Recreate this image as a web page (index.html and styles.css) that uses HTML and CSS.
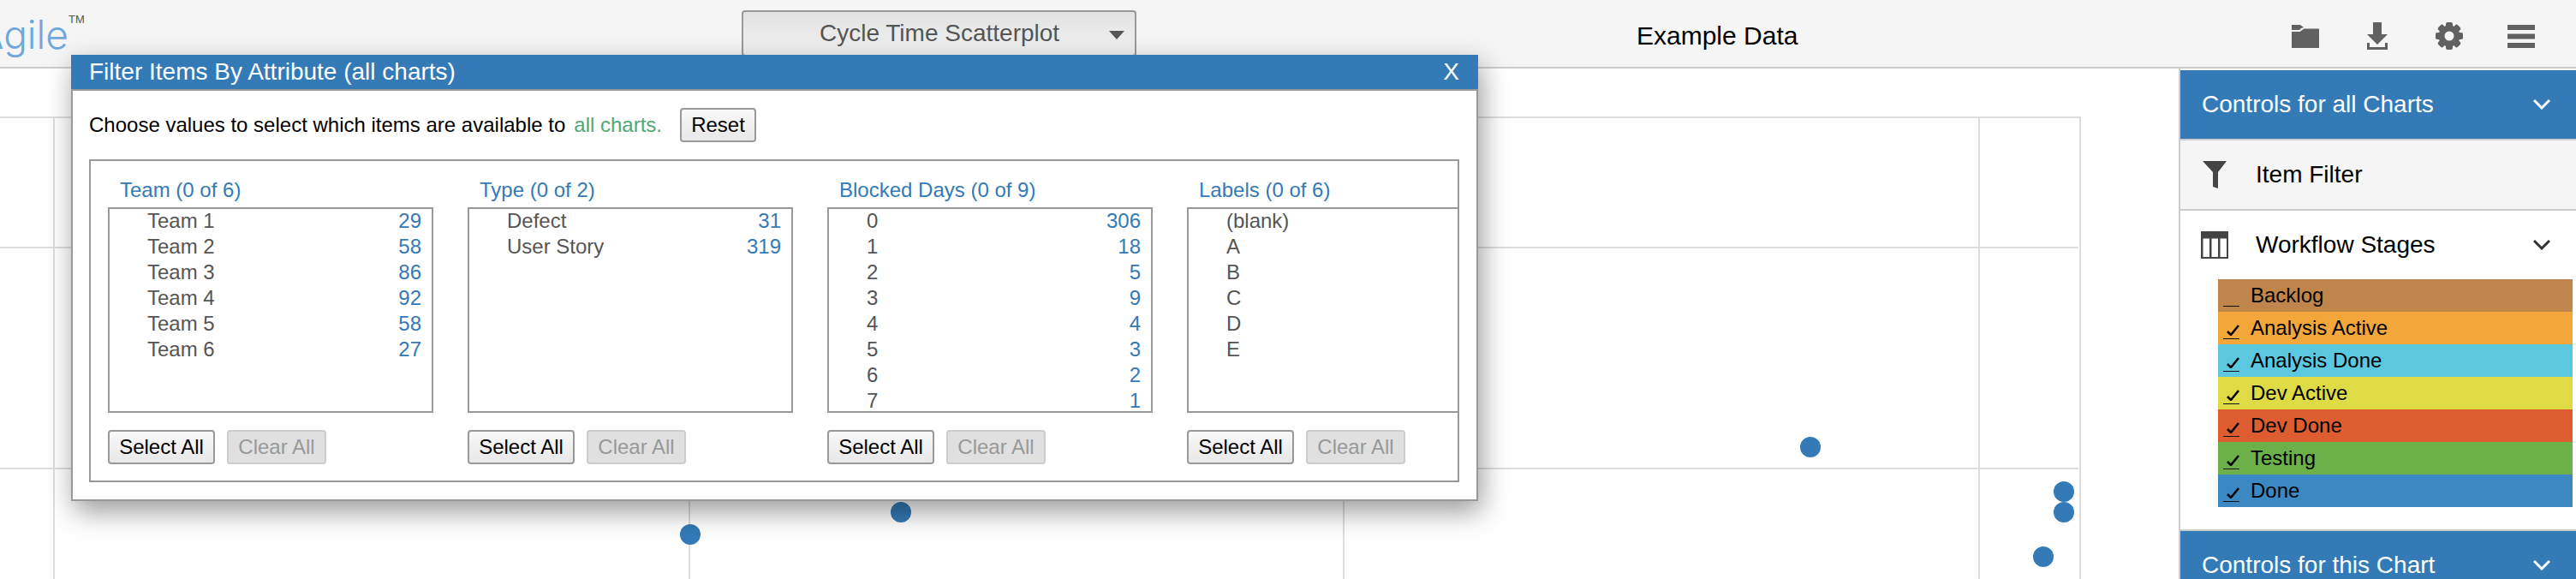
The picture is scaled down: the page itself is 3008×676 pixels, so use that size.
FILE: index.html
```html
<!DOCTYPE html>
<html>
  <head>
    <title>Cycle Time Scatterplot</title>
    <link rel="stylesheet" href="styles.css">
  </head>
  <body>
    <header class="top-bar">
      <div class="logo"><span class="logo-name">Agile</span><span class="logo-tm">TM</span></div>
      <div class="chart-select">
        <span>Cycle Time Scatterplot</span>
        <span class="select-arrow"></span>
      </div>
      <div class="data-name">Example Data</div>
      <div class="top-icons">
        <svg class="icon-folder" width="32" height="27" viewBox="0 0 32 27"><path d="M0 0H10L14 3L11 4L9 6H0Z"/><path d="M0 8H9.5L14.5 4.5H32V27H0Z"/></svg>
        <svg class="icon-download" width="24" height="32" viewBox="0 0 24 32"><path d="M7 0H17V14H24L12 26L0 14H7Z"/><path d="M0 24H3V29H21V24H24V32H0Z"/></svg>
        <svg class="icon-gear" width="32" height="32" viewBox="0 0 32 32">
          <circle cx="16" cy="16" r="12.5"/>
          <rect x="12" y="0" width="8" height="32" rx="2"/>
          <rect x="12" y="0" width="8" height="32" rx="2" transform="rotate(45 16 16)"/>
          <rect x="12" y="0" width="8" height="32" rx="2" transform="rotate(90 16 16)"/>
          <rect x="12" y="0" width="8" height="32" rx="2" transform="rotate(135 16 16)"/>
          <circle class="gear-hole" cx="16" cy="16" r="5.5"/>
        </svg>
        <svg class="icon-menu" width="32" height="27" viewBox="0 0 32 27"><rect width="32" height="6"/><rect y="10.5" width="32" height="6"/><rect y="21" width="32" height="6"/></svg>
      </div>
    </header>

    <div class="main">
      <div class="chart-area">
        <svg class="chart" width="2544" height="596" viewBox="0 80 2544 596">
          <g class="grid">
            <line x1="0" y1="137" x2="2430" y2="137"/>
            <line x1="0" y1="289" x2="2427" y2="289"/>
            <line x1="0" y1="547" x2="2427" y2="547"/>
            <line x1="63" y1="137" x2="63" y2="676"/>
            <line x1="805" y1="137" x2="805" y2="676"/>
            <line x1="1569" y1="137" x2="1569" y2="676"/>
            <line x1="2311" y1="137" x2="2311" y2="676"/>
            <line x1="2429" y1="137" x2="2429" y2="676"/>
          </g>
          <g class="points">
            <circle cx="806" cy="624" r="12"/>
            <circle cx="1052" cy="598" r="12"/>
            <circle cx="2114" cy="522" r="12"/>
            <circle cx="2410" cy="574" r="12"/>
            <circle cx="2410" cy="598" r="12"/>
            <circle cx="2386" cy="650" r="12"/>
          </g>
        </svg>
      </div>

      <aside class="sidebar">
        <div class="panel-head">
          <span>Controls for all Charts</span>
          <svg class="chevron" width="20" height="12" viewBox="0 0 20 12"><polyline points="1,1 10,10 19,1"/></svg>
        </div>
        <div class="side-row side-row-grey">
          <svg class="side-icon" width="32" height="32" viewBox="0 0 32 32"><path d="M2 0H30L20 13V32L14 30V13Z"/></svg>
          <span>Item Filter</span>
        </div>
        <div class="side-row">
          <svg class="side-icon" width="32" height="32" viewBox="0 0 32 32"><path fill-rule="evenodd" d="M0 0H32V32H0ZM2.5 8.5V30H10V8.5ZM12.5 8.5V30H20V8.5ZM22.5 8.5V30H30V8.5Z"/></svg>
          <span>Workflow Stages</span>
          <svg class="chevron chevron-dark" width="20" height="12" viewBox="0 0 20 12"><polyline points="1,1 10,10 19,1"/></svg>
        </div>
        <ul class="stages">
          <li class="stage stage-backlog"><span class="stage-check"></span>Backlog</li>
          <li class="stage stage-analysis-active"><span class="stage-check"><svg width="15" height="13" viewBox="0 0 15 13"><polyline points="1,8 5,12 14,1"/></svg></span>Analysis Active</li>
          <li class="stage stage-analysis-done"><span class="stage-check"><svg width="15" height="13" viewBox="0 0 15 13"><polyline points="1,8 5,12 14,1"/></svg></span>Analysis Done</li>
          <li class="stage stage-dev-active"><span class="stage-check"><svg width="15" height="13" viewBox="0 0 15 13"><polyline points="1,8 5,12 14,1"/></svg></span>Dev Active</li>
          <li class="stage stage-dev-done"><span class="stage-check"><svg width="15" height="13" viewBox="0 0 15 13"><polyline points="1,8 5,12 14,1"/></svg></span>Dev Done</li>
          <li class="stage stage-testing"><span class="stage-check"><svg width="15" height="13" viewBox="0 0 15 13"><polyline points="1,8 5,12 14,1"/></svg></span>Testing</li>
          <li class="stage stage-done"><span class="stage-check"><svg width="15" height="13" viewBox="0 0 15 13"><polyline points="1,8 5,12 14,1"/></svg></span>Done</li>
        </ul>
        <div class="panel-head panel-head-next">
          <span>Controls for this Chart</span>
          <svg class="chevron" width="20" height="12" viewBox="0 0 20 12"><polyline points="1,1 10,10 19,1"/></svg>
        </div>
      </aside>
    </div>

    <!-- filter dialog -->
    <div class="dialog">
      <div class="dialog-title">
        <span>Filter Items By Attribute (all charts)</span>
        <span>X</span>
      </div>
      <div class="dialog-body">
        <div class="intro">
          <span>Choose values to select which items are available to</span>
          <span class="intro-green">all charts.</span>
          <button class="btn btn-reset">Reset</button>
        </div>
        <div class="filters">
          <div class="filter">
            <div class="filter-name">Team (0 of 6)</div>
            <div class="filter-list">
              <div class="filter-item"><span>Team 1</span><span class="count">29</span></div>
              <div class="filter-item"><span>Team 2</span><span class="count">58</span></div>
              <div class="filter-item"><span>Team 3</span><span class="count">86</span></div>
              <div class="filter-item"><span>Team 4</span><span class="count">92</span></div>
              <div class="filter-item"><span>Team 5</span><span class="count">58</span></div>
              <div class="filter-item"><span>Team 6</span><span class="count">27</span></div>
            </div>
            <div class="filter-buttons">
              <button class="btn btn-select">Select All</button>
              <button class="btn btn-clear">Clear All</button>
            </div>
          </div>
          <div class="filter">
            <div class="filter-name">Type (0 of 2)</div>
            <div class="filter-list">
              <div class="filter-item"><span>Defect</span><span class="count">31</span></div>
              <div class="filter-item"><span>User Story</span><span class="count">319</span></div>
            </div>
            <div class="filter-buttons">
              <button class="btn btn-select">Select All</button>
              <button class="btn btn-clear">Clear All</button>
            </div>
          </div>
          <div class="filter">
            <div class="filter-name">Blocked Days (0 of 9)</div>
            <div class="filter-list">
              <div class="filter-item"><span>0</span><span class="count">306</span></div>
              <div class="filter-item"><span>1</span><span class="count">18</span></div>
              <div class="filter-item"><span>2</span><span class="count">5</span></div>
              <div class="filter-item"><span>3</span><span class="count">9</span></div>
              <div class="filter-item"><span>4</span><span class="count">4</span></div>
              <div class="filter-item"><span>5</span><span class="count">3</span></div>
              <div class="filter-item"><span>6</span><span class="count">2</span></div>
              <div class="filter-item"><span>7</span><span class="count">1</span></div>
            </div>
            <div class="filter-buttons">
              <button class="btn btn-select">Select All</button>
              <button class="btn btn-clear">Clear All</button>
            </div>
          </div>
          <div class="filter">
            <div class="filter-name">Labels (0 of 6)</div>
            <div class="filter-list">
              <div class="filter-item"><span>(blank)</span></div>
              <div class="filter-item"><span>A</span></div>
              <div class="filter-item"><span>B</span></div>
              <div class="filter-item"><span>C</span></div>
              <div class="filter-item"><span>D</span></div>
              <div class="filter-item"><span>E</span></div>
            </div>
            <div class="filter-buttons">
              <button class="btn btn-select">Select All</button>
              <button class="btn btn-clear">Clear All</button>
            </div>
          </div>
        </div>
      </div>
    </div>
  </body>
</html>
```

FILE: styles.css
```css
html,
body {
  margin: 0;
  height: 676px;
  overflow: hidden;
  background: #fff;
  font-family: "Liberation Sans", Arial, sans-serif;
}
.top-bar {
  display: flex;
  align-items: flex-start;
  box-sizing: border-box;
  height: 80px;
  padding-top: 12px;
  background: #f5f5f5;
  border-bottom: 2px solid #ccc;
}
.logo {
  width: 866px;
  height: 78px;
  margin-top: -12px;
  flex: none;
  position: relative;
  overflow: hidden;
}
.logo-name {
  position: absolute;
  right: 786px;
  top: 17px;
  font-family: Inter, sans-serif;
  font-weight: 300;
  font-size: 46px;
  line-height: 46px;
  color: #6fa8dc;
}
.logo-tm {
  position: absolute;
  left: 80px;
  top: 16px;
  font-size: 13px;
  line-height: 13px;
  color: #555;
}
.chart-select {
  display: flex;
  align-items: center;
  box-sizing: border-box;
  width: 461px;
  height: 54px;
  padding-left: 89px;
  flex: none;
  border: 2px solid #999;
  border-radius: 4px;
  background: linear-gradient(#e2e2e2, #f2f2f2);
  color: #555;
  font-size: 28px;
}
.select-arrow {
  margin-left: 58px;
  margin-top: 4px;
  border-left: 9px solid transparent;
  border-right: 9px solid transparent;
  border-top: 10px solid #555;
}
.data-name {
  margin-left: 584px;
  width: 600px;
  flex: none;
  line-height: 60px;
  font-size: 30px;
  color: #000;
}
.top-icons {
  display: flex;
  align-items: center;
  height: 60px;
  margin-left: 165px;
  fill: #616161;
}
.icon-folder { margin-right: 56px; }
.icon-download { margin-right: 56px; }
.icon-gear { margin-right: 52px; }
.gear-hole { fill: #f5f5f5; }
.main {
  display: flex;
  height: 596px;
}
.chart-area {
  width: 2544px;
  flex: none;
}
.chart {
  display: block;
}
.grid line {
  stroke: #ddd;
  stroke-width: 2;
}
.points circle {
  fill: #337ab7;
}
.sidebar {
  width: 462px;
  flex: none;
  padding-top: 2px;
  border-left: 2px solid #ccc;
}
.panel-head {
  display: flex;
  align-items: center;
  justify-content: space-between;
  box-sizing: border-box;
  height: 82px;
  padding: 0 30px 0 25px;
  background: #337ab7;
  border-bottom: 2px solid #ccc;
  color: #fff;
  font-size: 28px;
}
.panel-head-next {
  border-bottom: none;
  margin-top: 0;
}
.chevron {
  fill: none;
  stroke: #fff;
  stroke-width: 3;
}
.chevron-dark {
  stroke: #333;
  margin-left: auto;
}
.side-row {
  display: flex;
  align-items: center;
  box-sizing: border-box;
  height: 80px;
  padding: 0 30px 0 24px;
  font-size: 28px;
  color: #000;
}
.side-row-grey {
  height: 82px;
  background: #f5f5f5;
  border-bottom: 2px solid #ccc;
}
.side-icon {
  margin-right: 32px;
  fill: #444;
  flex: none;
}
.stages {
  list-style: none;
  width: 414px;
  margin: 0 0 26px 44px;
  padding: 0;
  border-bottom: 0;
}
.stage {
  display: flex;
  align-items: center;
  height: 38px;
  font-size: 24px;
  color: #000;
}
.stage-check {
  display: flex;
  justify-content: flex-end;
  align-items: flex-end;
  align-self: flex-start;
  box-sizing: border-box;
  width: 19px;
  height: 32px;
  margin: 0 13px 0 6px;
  padding-bottom: 3px;
  border-bottom: 1.5px solid #111;
}
.stage-check svg {
  fill: none;
  stroke: #000;
  stroke-width: 2.5;
}
.stage-backlog { background: #c0854b; }
.stage-analysis-active { background: #f3a73b; }
.stage-analysis-done { background: #5bc8e0; }
.stage-dev-active { background: #dfdb44; }
.stage-dev-done { background: #de5d30; }
.stage-testing { background: #6cb04a; }
.stage-done { background: #3b88c2; }
.stages + .panel-head {
  border-top: 2px solid #ccc;
  height: 82px;
}
.dialog {
  position: absolute;
  left: 83px;
  top: 64px;
  width: 1643px;
  box-shadow: 4px 12px 30px rgba(0, 0, 0, 0.4);
  background: #fff;
}
.dialog-title {
  display: flex;
  justify-content: space-between;
  align-items: center;
  height: 40px;
  padding: 0 22px 0 21px;
  background: #337ab7;
  border-bottom: 2px solid #999;
  color: #fff;
  font-size: 28px;
}
.dialog-body {
  box-sizing: border-box;
  height: 479px;
  padding: 20px 20px 20px 19px;
  border: 2px solid #999;
  border-top: none;
}
.intro {
  display: flex;
  align-items: center;
  height: 40px;
  font-size: 24px;
  color: #000;
}
.intro-green {
  margin-left: 10px;
  color: #4fa874;
}
.btn {
  box-sizing: border-box;
  height: 40px;
  padding: 0;
  border: 2px solid #999;
  border-radius: 4px;
  font-family: inherit;
  font-size: 24px;
  background: linear-gradient(#f8f8f8, #e8e8e8);
  color: #000;
}
.btn-reset {
  width: 89px;
  margin-left: 21px;
}
.btn-select {
  width: 125px;
}
.btn-clear {
  width: 116px;
  margin-left: 14px;
  border-color: #ccc;
  background: #e0e0e0;
  color: #999;
}
.filters {
  display: flex;
  gap: 40px;
  box-sizing: border-box;
  height: 377px;
  margin-top: 20px;
  padding-left: 20px;
  border: 2px solid #999;
  overflow: hidden;
}
.filter {
  flex: 0 0 380px;
}
.filter-name {
  padding: 19px 0 5px 14px;
  line-height: 30px;
  font-size: 24px;
  color: #337ab7;
}
.filter-list {
  box-sizing: border-box;
  height: 240px;
  border: 2px solid #999;
  overflow: hidden;
}
.filter-item {
  display: flex;
  justify-content: space-between;
  height: 30px;
  padding: 0 12px 0 44px;
  line-height: 28px;
  font-size: 24px;
  color: #555;
}
.count {
  color: #337ab7;
}
.filter-buttons {
  display: flex;
  margin-top: 20px;
}
```
